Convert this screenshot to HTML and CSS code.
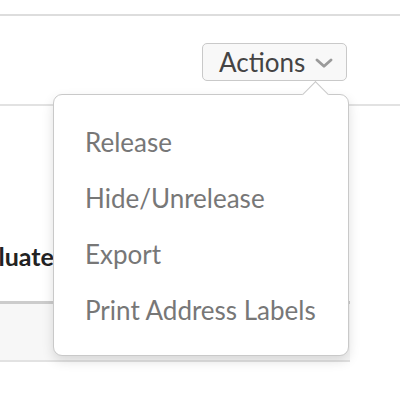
FILE: index.html
```html
<!DOCTYPE html>
<html>
<head>
<meta charset="utf-8">
<link rel="stylesheet" href="styles.css">
</head>
<body>
<div class="page">
  <div class="top-rule"></div>
  <div class="toolbar">
    <div class="actions">
      <button class="actions-btn">Actions
        <svg class="chev" width="18" height="10" viewBox="0 0 18 10"><path d="M2 2 L9 8.3 L16 2" fill="none" stroke="#9a9a9a" stroke-width="2.8" stroke-linecap="round" stroke-linejoin="round"/></svg>
      </button>
      <div class="menu">
        <div class="caret"></div>
        <ul class="menu-list">
          <li>Release</li>
          <li>Hide/Unrelease</li>
          <li>Export</li>
          <li>Print Address Labels</li>
        </ul>
      </div>
    </div>
  </div>
  <div class="content">
    <h2 class="heading">Evaluate Students</h2>
    <div class="table">
      <div class="table-head"></div>
    </div>
  </div>
</div>
</body>
</html>
```
FILE: styles.css
```css
html, body {
  margin: 0;
  padding: 0;
  background: #fff;
  font-family: Lato, "Liberation Sans", sans-serif;
}
.page {
  width: 400px;
  height: 400px;
  overflow: hidden;
}
.top-rule {
  height: 14px;
  border-bottom: 2px solid #dddddd;
}
.toolbar {
  border-bottom: 2px solid #e2e2e2;
  display: flex;
  justify-content: flex-end;
  padding-right: 53px;
  padding-top: 27px;
  box-sizing: border-box;
  height: 90px;
}
.actions {
  position: relative;
}
.actions-btn {
  display: flex;
  align-items: center;
  gap: 10px;
  height: 38px;
  width: 145px;
  box-sizing: border-box;
  padding: 0 0 0 16px;
  border: 1.5px solid #c9c9c9;
  border-radius: 5px;
  background: #f8f8f8;
  font-family: Lato, "Liberation Sans", sans-serif;
  font-size: 26px;
  color: #444;
  cursor: pointer;
}
.chev {
  margin-top: 2px;
}
.menu {
  position: absolute;
  top: 51px;
  right: -2px;
  width: 296px;
  height: 262px;
  box-sizing: border-box;
  background: #fff;
  border: 1.5px solid #c9c9c9;
  border-radius: 9px;
  box-shadow: 0 5px 12px rgba(0,0,0,0.13);
  z-index: 5;
}
.caret {
  position: absolute;
  top: -10px;
  right: 23px;
  width: 18px;
  height: 18px;
  background: #fff;
  border-left: 1.5px solid #c9c9c9;
  border-top: 1.5px solid #c9c9c9;
  transform: rotate(45deg);
}
.menu-list {
  list-style: none;
  margin: 0;
  padding: 19px 0 0 31px;
}
.menu-list li {
  height: 56px;
  line-height: 56px;
  font-size: 26px;
  color: #777;
}
.content {
  padding-top: 135px;
}
.heading {
  margin: 0 0 0 -41px;
  font-size: 25px;
  font-weight: 700;
  color: #222;
  white-space: nowrap;
  line-height: 30px;
}
.table {
  margin-top: 30px;
  width: 350px;
}
.table-head {
  height: 56px;
  border-top: 3px solid #cccccc;
  border-bottom: 2px solid #e2e2e2;
  background: #f7f7f7;
}
```
